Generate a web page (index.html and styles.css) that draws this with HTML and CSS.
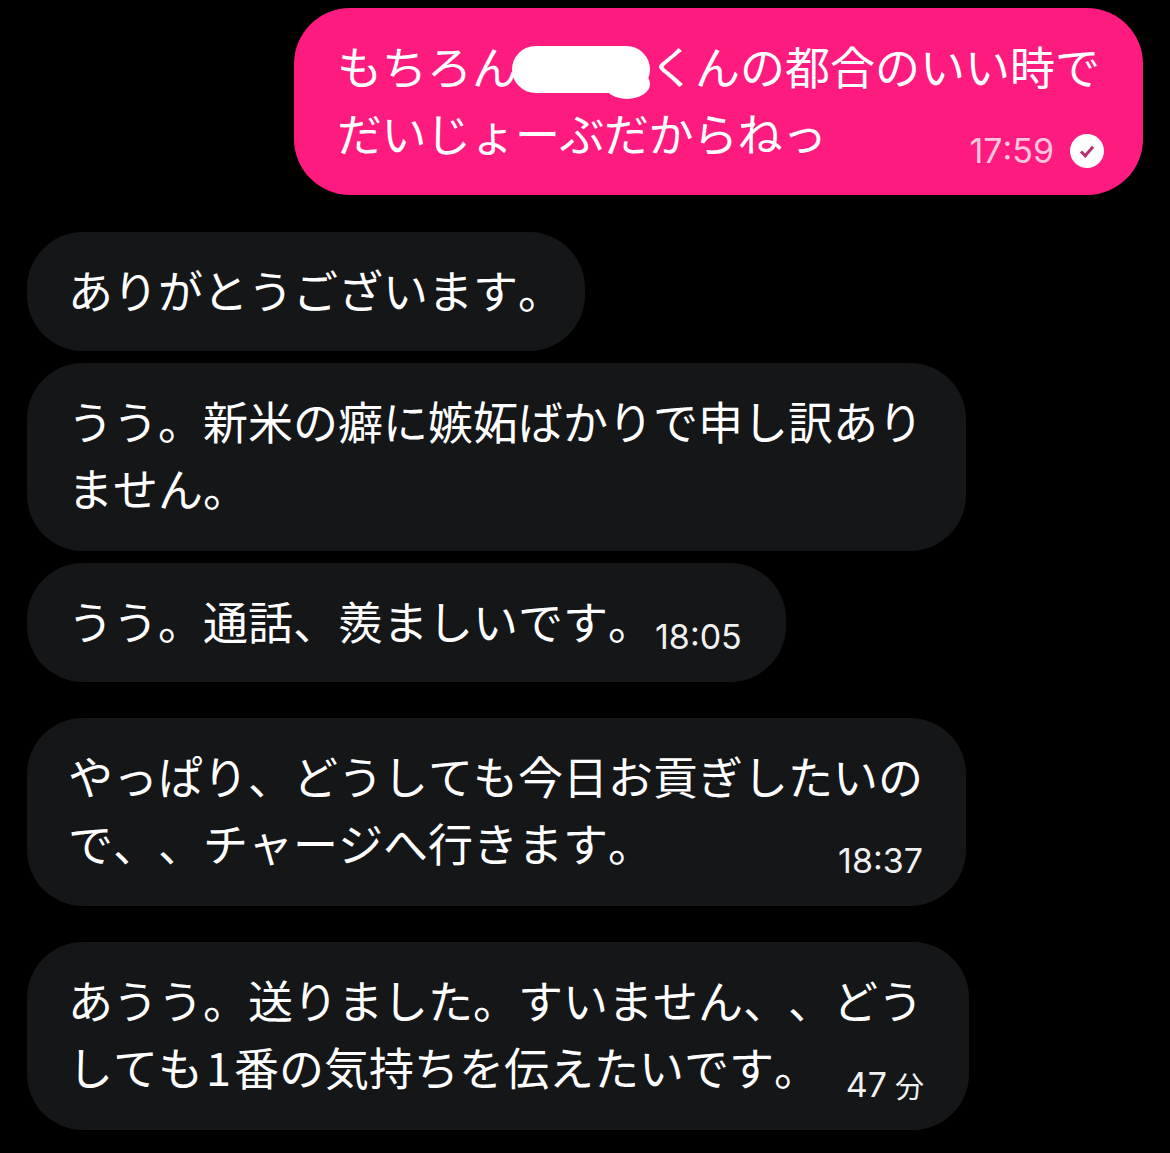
FILE: index.html
```html
<!DOCTYPE html>
<html lang="ja">
<head>
  <meta charset="UTF-8">
  <meta name="viewport" content="width=device-width, initial-scale=1.0">
  <title>メッセージ</title>
  <link rel="stylesheet" href="styles.css">
</head>
<body>
  <div class="chat">
    <div class="bubble mine">
      <div class="line">もちろん<span class="blur"></span>くんの都合のいい時で</div>
      <div class="line last">
        <span class="tight">だいじょーぶだからねっ</span>
        <span class="meta">17:59
          <svg class="check" viewBox="0 0 34 34">
            <circle cx="17" cy="17" r="17" fill="#fff"/>
            <path d="M11 17.5l4.2 4.2 7.8-9" fill="none" stroke="#b5336a" stroke-width="3"/>
          </svg>
        </span>
      </div>
    </div>

    <div class="bubble theirs w-thanks">
      <div class="line">ありがとうございます。</div>
    </div>
    <div class="bubble theirs w-long">
      <div class="line">うう。新米の癖に嫉妬ばかりで申し訳あり</div>
      <div class="line">ません。</div>
    </div>
    <div class="bubble theirs w-call">
      <div class="line last">
        <span>うう。通話、羨ましいです。</span>
        <span class="meta">18:05</span>
      </div>
    </div>

    <div class="bubble theirs w-long group-start">
      <div class="line">やっぱり、どうしても今日お貢ぎしたいの</div>
      <div class="line last">
        <span>で、、チャージへ行きます。</span>
        <span class="meta">18:37</span>
      </div>
    </div>

    <div class="bubble theirs w-last group-start">
      <div class="line">あうう。送りました。すいません、、どう</div>
      <div class="line last">
        <span>しても<span class="num">1</span>番の気持ちを伝えたいです。</span>
        <span class="meta">47<span class="unit">分</span></span>
      </div>
    </div>
  </div>
</body>
</html>
```

FILE: styles.css
```css
body, html {
  margin: 0;
  padding: 0;
  background-color: #000;
  color: #fff;
  font-family: "Noto Sans CJK JP", "Noto Sans", sans-serif;
}
.chat {
  display: flex;
  flex-direction: column;
  padding: 8px 27px 23px;
  gap: 12px;
}
.bubble {
  box-sizing: border-box;
  padding: 24px 43px 30px 41px;
  border-radius: 56px;
  font-size: 45px;
  font-weight: 400;
  line-height: 67px;
  white-space: nowrap;
  font-feature-settings: "chws" 0, "palt" 0;
  font-kerning: none;
  text-spacing-trim: space-all;
}
.mine {
  align-self: flex-end;
  width: 849px;
  height: 187px;
  padding-left: 43px;
  background-color: #fe1b7f;
}
.theirs {
  align-self: flex-start;
  background-color: #151618;
}
.group-start {
  margin-top: 24px;
}
.w-thanks {
  width: 558px;
  height: 119px;
  margin-top: 25px;
}
.w-long {
  width: 939px;
}
.w-call {
  width: 759px;
  height: 119px;
}
.w-last {
  width: 942px;
}
.line {
  display: flex;
  align-items: center;
  height: 67px;
}
.last {
  justify-content: space-between;
}
.w-call .last {
  justify-content: flex-start;
}
.w-call .meta {
  margin-top: 33px;
  margin-left: 2px;
}
.tight {
  letter-spacing: -0.5px;
}
.num {
  margin: 0 3px;
}
.meta {
  display: flex;
  align-items: center;
  gap: 8px;
  margin-top: 37px;
  font-family: "Inter", "Noto Sans CJK JP", sans-serif;
  font-size: 34px;
  font-weight: 400;
  line-height: 40px;
  color: #f0f0f0;
}
.mine .meta {
  gap: 16px;
  margin-right: -4px;
  color: #ffc4de;
}
.unit {
  margin-right: 2px;
  font-family: "Noto Sans CJK JP", sans-serif;
  font-size: 29px;
}
.check {
  width: 34px;
  height: 34px;
}
.blur {
  position: relative;
  display: inline-block;
  width: 138px;
  height: 47px;
  margin: 8px 0 0 -5px;
  border-radius: 24px;
  background-color: #fff;
}
.blur::after {
  content: "";
  position: absolute;
  right: 0;
  bottom: -6px;
  width: 46px;
  height: 30px;
  border-radius: 50%;
  background-color: #fff;
}
```
